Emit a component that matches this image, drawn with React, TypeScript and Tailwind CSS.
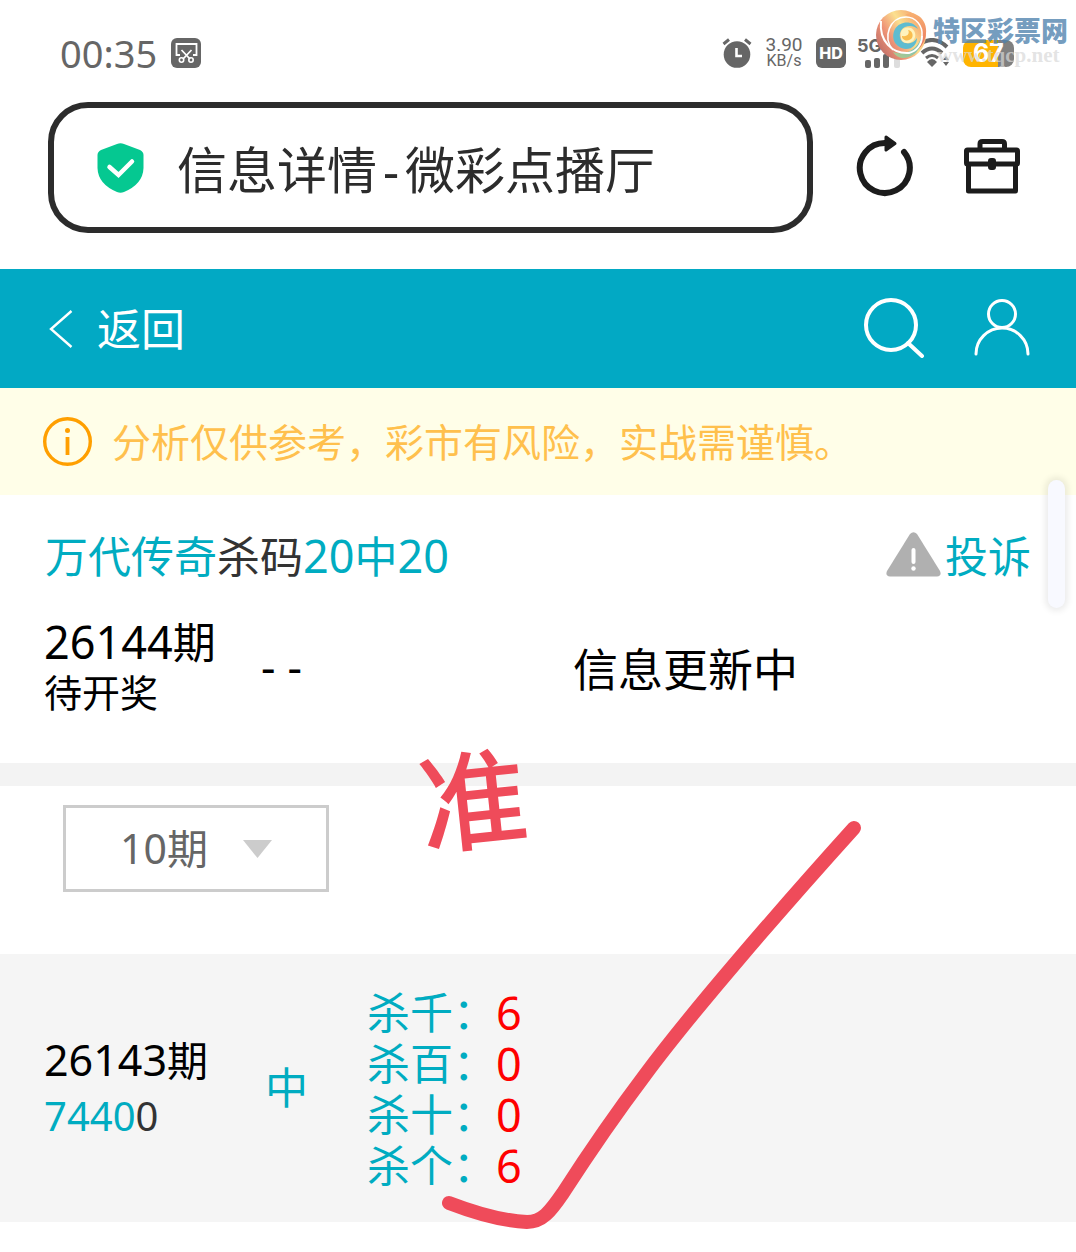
import type { ReactNode } from "react";

const cjk = "font-['Noto_Sans','Noto_Sans_CJK_SC',sans-serif]";

function ScissorsIcon() {
  return (
    <svg className="size-[30px]" viewBox="0 0 30 30" fill="none" aria-hidden="true">
      <rect width="30" height="30" rx="6" fill="#666" />
      <path d="M9 17H5.500V6H25.500V17H22" stroke="#fff" strokeWidth="1.800" />
      <path d="M10.500 12L19 21M20.500 12L12 21" stroke="#fff" strokeWidth="1.800" />
      <circle cx="10.500" cy="22" r="2.200" stroke="#fff" strokeWidth="1.600" />
      <circle cx="20" cy="22" r="2.200" stroke="#fff" strokeWidth="1.600" />
    </svg>
  );
}

function AlarmIcon() {
  return (
    <svg className="size-[30px]" viewBox="0 0 30 30" fill="none" aria-hidden="true">
      <circle cx="15" cy="16.500" r="13.300" fill="#666" />
      <path d="M1.500 6L7 1.500M28.500 6L23 1.500" stroke="#666" strokeWidth="3" />
      <path d="M14.500 10V18H20" stroke="#fff" strokeWidth="2.600" />
    </svg>
  );
}

function SignalIcon() {
  return (
    <svg className="h-[14px] w-9" viewBox="0 0 36 14" aria-hidden="true">
      <rect x="0" y="6" width="6" height="8" rx="2" fill="#666" />
      <rect x="9" y="4" width="6" height="10" rx="2" fill="#666" />
      <rect x="18" y="0" width="6" height="14" rx="2" fill="#666" />
      <rect x="29" y="0" width="6" height="14" rx="2" fill="#ddd" />
    </svg>
  );
}

function WifiIcon() {
  return (
    <svg className="h-[30px] w-9" viewBox="0 0 36 30" fill="none" aria-hidden="true">
      <path d="M2 9Q17 -5 32 9" stroke="#666" strokeWidth="4" />
      <path d="M7 15Q17 6 27 15" stroke="#666" strokeWidth="4" />
      <path d="M12 24Q17 18 22 24L17 29Z" fill="#666" />
      <path d="M11 20Q17 15 23 20" stroke="#666" strokeWidth="3" />
      <path d="M28 22L31 18L34 22ZM28 24L31 28L34 24Z" fill="#666" />
    </svg>
  );
}

function Swirl() {
  return (
    <svg className="size-[52px]" viewBox="0 0 52 52" fill="none" aria-hidden="true">
      <defs>
        <linearGradient id="swirlBody" x1="0" y1="0.800" x2="0.900" y2="0.200">
          <stop offset="0" stopColor="#b96a66" />
          <stop offset="0.350" stopColor="#ef9477" />
          <stop offset="0.650" stopColor="#fbe08f" />
          <stop offset="1" stopColor="#f5a06c" />
        </linearGradient>
        <linearGradient id="swirlEdge" x1="0.500" y1="0" x2="0.500" y2="1">
          <stop offset="0" stopColor="#f8b070" />
          <stop offset="1" stopColor="#e8705f" />
        </linearGradient>
        <linearGradient id="swirlTail" x1="0" y1="1" x2="1" y2="0">
          <stop offset="0" stopColor="#b5c98a" />
          <stop offset="1" stopColor="#63c0c4" />
        </linearGradient>
      </defs>
      <circle cx="26" cy="26" r="25" fill="url(#swirlBody)" />
      <path d="M30 6C46 10 52 26 43 41C54 30 54 12 42 6Q36 2 30 6Z" fill="url(#swirlEdge)" />
      <path d="M18 43C30 47 42 41 46 29C47 41 38 49 27 49Q21 48 18 43Z" fill="url(#swirlTail)" />
      <path d="M43 20C38 11 25 12 20 20C15 30 21 39 31 40C38 40 42 35 42 29C39 34 33 36 28 33C23 29 24 21 30 18C35 16 39 17 43 20Z" fill="#5fbcd0" />
      <path d="M26 28C24 21 30 17 36 19C43 23 41 33 33 34C28 34 26 32 26 28Z" fill="#fff3bd" />
      <path d="M27 27C27 32 34 33 37 29C39 25 36 21 33 21C35 24 33 28 27 27Z" fill="#f9bd4f" />
      <path d="M6 12C4 32 17 45 34 44C42 42 47 35 47 27" stroke="#fff" strokeWidth="2" />
      <path d="M18 41C7 28 15 8 31 8C41 8 48 17 47 27" stroke="#fff" strokeWidth="1.500" />
    </svg>
  );
}

function StatusBar() {
  return (
    <div className="relative flex h-[102px] items-start justify-between pt-[37px] pr-[62px] pl-[60px] text-[#666]">
      <div className="flex items-center gap-[14px]">
        <span className="font-['Noto_Sans'] text-[38px] leading-8">00:35</span>
        <ScissorsIcon />
      </div>
      <div className="flex items-center">
        <AlarmIcon />
        <div className="ml-3 w-10 text-center font-['Roboto'] text-[19px] leading-4">
          <div>3.90</div>
          <div className="text-base leading-4">KB/s</div>
        </div>
        <div className="ml-3 flex size-[30px] items-center justify-center rounded-md bg-[#666] font-['Inter'] text-base font-extrabold text-white">HD</div>
        <div className="ml-[11px] flex h-[30px] w-12 flex-col justify-between">
          <span className="font-['Inter'] text-lg leading-4 font-bold">5G</span>
          <span className="flex pl-2"><SignalIcon /></span>
        </div>
        <div className="ml-[10px]"><WifiIcon /></div>
        <div className="ml-3 flex h-[27px] w-[51px] items-center justify-center rounded-lg bg-linear-to-r from-[#ffb400] from-68% to-[#808080] to-68% font-['Inter'] text-[25px] leading-6 font-bold text-white">67</div>
      </div>
      <div className="absolute top-[9px] right-2 flex gap-[6px]">
        <Swirl />
        <div className="pt-1">
          <div className="font-['Noto_Sans_CJK_SC',sans-serif] text-[27px] leading-[34px] font-black text-[#4f82ae]/80">特区彩票网</div>
          <div className="pl-1 font-['Liberation_Serif'] text-[21px] leading-4 font-bold text-[#d8d8d8]/70">www.tqcp.net</div>
        </div>
      </div>
    </div>
  );
}

function AddressBar() {
  return (
    <div className="flex items-center pr-[55px] pl-12">
      <div className="flex h-[131px] flex-1 items-center rounded-[40px] border-[6px] border-[#2c2c2c] pl-[43px]">
        <svg className="h-[50px] w-[47px]" viewBox="0 0 47 50" aria-hidden="true">
          <path d="M20 1Q23.500 -0.500 27 1L43 7Q46.500 9 46.500 12V25Q46 41 27 49Q23.500 50.500 20 49Q1 41 0.500 25V12Q0.500 9 4 7Z" fill="#05c891" />
          <path d="M12.500 24L21.500 32L35 18.500" fill="none" stroke="#fff" strokeWidth="4.500" strokeLinecap="round" />
        </svg>
        <div className="ml-[33px] pt-1 text-[50px] leading-[60px] whitespace-nowrap text-[#2c2c2c]">
          信息详情<span className="mx-[6px]">-</span>微彩点播厅
        </div>
      </div>
      <button aria-label="刷新" className="ml-[43px] pb-1">
        <svg className="h-[62px] w-[58px]" viewBox="0 0 58 62" fill="none" aria-hidden="true">
          <path d="M29 8A25 25 0 1 0 48 17" stroke="#1c1c1c" strokeWidth="6" strokeLinecap="round" />
          <path d="M30 2L39 8.500L30 15Z" fill="#1c1c1c" stroke="#1c1c1c" strokeWidth="3" strokeLinejoin="round" />
        </svg>
      </button>
      <button aria-label="工具箱" className="ml-[49px] pb-1">
        <svg className="h-[56px] w-[58px]" viewBox="0 0 58 56" fill="none" stroke="#1c1c1c" strokeWidth="5" strokeLinejoin="round" aria-hidden="true">
          <path d="M17 10V6Q17 3.500 19.500 3.500H39Q41.500 3.500 41.500 6V10" />
          <rect x="3.500" y="12" width="51" height="14" rx="1" />
          <path d="M5.500 26V53H52.500V26" />
          <rect x="27" y="22" width="4" height="8" rx="1" strokeWidth="4" />
        </svg>
      </button>
    </div>
  );
}

function Header() {
  return (
    <header className="mt-9 flex h-[119px] items-center bg-[#02a9c4] pr-[45px] pl-[49px] text-white">
      <a href="#" className="flex items-center gap-6">
        <svg className="h-[38px] w-6" viewBox="0 0 24 38" fill="none" stroke="currentColor" strokeWidth="2.400" aria-hidden="true">
          <path d="M22.500 1L2 19L22.500 37" />
        </svg>
        <span className="text-[44px] leading-[60px]">返回</span>
      </a>
      <button aria-label="搜索" className="ml-auto pb-1">
        <svg className="h-[62px] w-[62px]" viewBox="0 0 62 62" fill="none" stroke="currentColor" strokeWidth="4" strokeLinecap="round" aria-hidden="true">
          <circle cx="28" cy="29" r="25" />
          <path d="M45 47L59 60" />
        </svg>
      </button>
      <button aria-label="我的" className="ml-12 pb-1">
        <svg className="h-[60px] w-[58px]" viewBox="0 0 58 60" fill="none" stroke="currentColor" strokeWidth="3" strokeLinecap="round" aria-hidden="true">
          <circle cx="29" cy="17" r="13.500" />
          <path d="M3 57A26 26 0 0 1 55 57" />
        </svg>
      </button>
    </header>
  );
}

function Num({ children, className }: { children: ReactNode; className: string }) {
  return <span className={className}>{children}</span>;
}

const kills = [
  { label: "杀千：", value: "6" },
  { label: "杀百：", value: "0" },
  { label: "杀十：", value: "0" },
  { label: "杀个：", value: "6" },
];

export default function App() {
  return (
    <div className={"relative min-h-screen overflow-hidden bg-white text-black " + cjk}>
      <StatusBar />
      <AddressBar />
      <Header />
      <div className="flex h-[107px] items-center bg-[#fffee8] pl-[43px]">
        <svg className="size-[49px]" viewBox="0 0 49 49" fill="none" aria-hidden="true">
          <circle cx="24.500" cy="24.500" r="22.800" stroke="#ff9f00" strokeWidth="3.400" />
          <path d="M24.500 20V38" stroke="#ff9f00" strokeWidth="3.800" />
          <circle cx="24.500" cy="13.500" r="2.500" fill="#ff9f00" />
        </svg>
        <p className="ml-5 text-[39px] leading-[52px] whitespace-nowrap text-[#ffc04d]">分析仅供参考，彩市有风险，实战需谨慎。</p>
      </div>

      <main>
        <div className="flex items-center justify-between pt-7 pr-[45px] pl-[45px] text-[43px] leading-[66px] text-[#00acc1]">
          <h1>
            万代传奇<span className="text-[#333]">杀码</span>
            <Num className="text-[45px]">20</Num>中<Num className="text-[45px]">20</Num>
          </h1>
          <a href="#" className="flex items-center gap-1">
            <svg className="mb-1 h-[45px] w-[55px]" viewBox="0 0 55 45" aria-hidden="true">
              <path d="M24 2Q27.500 -1.500 31 2L54 39Q56 44 51 44.500H4Q-1 44 1 39Z" fill="#b0b0b0" />
              <path d="M27.500 18V30" stroke="#fff" strokeWidth="4" strokeLinecap="round" />
              <circle cx="27.500" cy="36.500" r="2.200" fill="#fff" />
            </svg>
            投诉
          </a>
        </div>

        <div className="flex items-center pt-[26px] pl-11">
          <div className="w-[217px]">
            <div className="text-[43px] leading-[52px]"><Num className="text-[45px]">26144</Num>期</div>
            <div className="text-[38px] leading-[46px]">待开奖</div>
          </div>
          <div className="w-[312px] text-[45px] leading-[60px]"><span>-</span><span className="ml-3">-</span></div>
          <div className="pt-2 text-[45px] leading-[60px]">信息更新中</div>
        </div>

        <div className="mt-12 h-[23px] bg-[#f3f3f3]" />

        <div className="h-[168px] pt-[19px] pl-[63px]">
          <div className="relative w-[266px]">
            <select aria-label="期数" className="h-[87px] w-full appearance-none border-[3px] border-[#ccc] bg-white pl-[54px] text-[41px] text-[#666]">
              <option>10期</option>
            </select>
            <svg className="pointer-events-none absolute top-[35px] right-[57px] h-[18px] w-[29px]" viewBox="0 0 29 18" aria-hidden="true">
              <path d="M0 0H29L14.500 18Z" fill="#ccc" />
            </svg>
          </div>
        </div>

        <section className="flex h-[268px] items-center bg-[#f5f5f5] pl-11">
          <div className="w-[221px]">
            <div className="text-[41px] leading-[56px]"><Num className="text-[43px]">26143</Num>期</div>
            <div className="text-[40px] leading-[56px] text-[#00acc1]">7440<span className="text-[#333]">0</span></div>
          </div>
          <div className="w-[102px] text-[43px] leading-[60px] text-[#00acc1]">中</div>
          <dl className="pt-px text-[43px] leading-[51px]">
            {kills.map((k) => (
              <div key={k.label} className="flex">
                <dt className="text-[#00acc1]">{k.label}</dt>
                <dd className="text-[45px] text-[#f00]">{k.value}</dd>
              </div>
            ))}
          </dl>
        </section>
      </main>

      <div className="absolute top-[722px] left-[419px] -rotate-6 text-[108px] leading-[156px] font-medium text-[#ef4b5a]">准</div>
      <svg className="pointer-events-none absolute top-[815px] left-[435px] h-[420px] w-[435px]" viewBox="435 815 435 420" fill="none" aria-hidden="true">
        <path d="M449 1203C475 1213 505 1221 527 1222C542 1222 550 1212 563 1193C583 1162 605 1128 645 1075C690 1014 780 910 854 828" stroke="#ef4b5a" strokeWidth="14" strokeLinecap="round" strokeLinejoin="round" />
      </svg>
      <div className="absolute top-[480px] right-[11px] h-32 w-[17px] rounded-full bg-[#f8f9ff] shadow-[0_0_6px_3px_#00000014]" />
    </div>
  );
}
